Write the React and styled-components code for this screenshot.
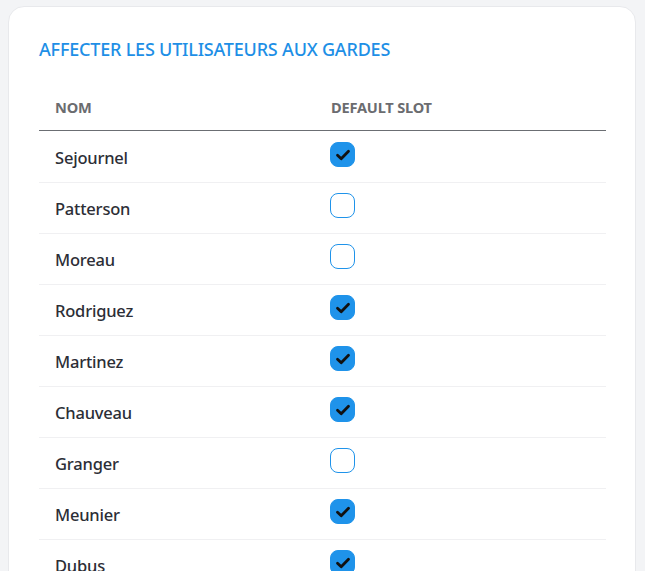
import React from 'react';
import styled, { createGlobalStyle } from 'styled-components';

const GlobalStyle = createGlobalStyle`
  html, body {
    margin: 0;
    padding: 0;
    background: #f3f4f6;
    font-family: "Noto Sans", "Open Sans", sans-serif;
  }
`;

const users = [
  { name: 'Sejournel', slot: true },
  { name: 'Patterson', slot: false },
  { name: 'Moreau', slot: false },
  { name: 'Rodriguez', slot: true },
  { name: 'Martinez', slot: true },
  { name: 'Chauveau', slot: true },
  { name: 'Granger', slot: false },
  { name: 'Meunier', slot: true },
  { name: 'Dubus', slot: true },
  { name: 'Lefebvre', slot: false },
];

function App() {
  return (
    <>
      <GlobalStyle />
      <Page>
        <Card>
          <Title>AFFECTER LES UTILISATEURS AUX GARDES</Title>
          <Table>
            <HeadRow>
              <HeadCell>NOM</HeadCell>
              <HeadCell>DEFAULT SLOT</HeadCell>
            </HeadRow>
            {users.map(u => (
              <Row key={u.name}>
                <NameCell>{u.name}</NameCell>
                <SlotCell>
                  <Checkbox checked={u.slot}>
                    {u.slot && (
                      <svg width="16" height="16" viewBox="0 0 16 16">
                        <path d="M2.5 8.2 L6.2 11.8 L13.5 4.3" fill="none" stroke="#111" strokeWidth="2.8" strokeLinecap="round" strokeLinejoin="round" />
                      </svg>
                    )}
                  </Checkbox>
                </SlotCell>
              </Row>
            ))}
          </Table>
        </Card>
      </Page>
    </>
  );
}

export default App;

const Page = styled.div`
  height: 571px;
  overflow: hidden;
  padding: 6px 9px 0 8px;
  box-sizing: border-box;
`;

const Card = styled.div`
  background: #ffffff;
  border: 1px solid #e8e9ec;
  border-radius: 16px;
  padding: 30px 29px 0 30px;
  min-height: 700px;
  box-sizing: border-box;
`;

const Title = styled.h2`
  margin: 0;
  font-size: 18px;
  line-height: 24px;
  font-weight: 500;
  color: #1e8fe6;
  letter-spacing: -0.2px;
`;

const Table = styled.div`
  margin-top: 20px;
  display: flex;
  flex-direction: column;
`;

const HeadRow = styled.div`
  display: grid;
  grid-template-columns: 276px 1fr;
  height: 50px;
  padding-top: 2px;
  box-sizing: border-box;
  align-items: center;
  border-bottom: 1px solid #6b6e73;
`;

const HeadCell = styled.div`
  padding-left: 16px;
  font-size: 14.6px;
  font-weight: 700;
  color: #6b6c70;
  letter-spacing: -0.2px;
`;

const Row = styled.div`
  display: grid;
  grid-template-columns: 276px 1fr;
  height: 51px;
  box-sizing: border-box;
  align-items: center;
  border-bottom: 1px solid #f0f0f2;

  &:nth-child(2) {
    height: 52px;
    padding-top: 1px;
  }
`;

const NameCell = styled.div`
  padding-left: 16px;
  font-size: 16.5px;
  font-weight: 500;
  color: #2c2e36;
  letter-spacing: -0.2px;
`;

const SlotCell = styled.div`
  padding-left: 15px;
  display: flex;
  align-items: center;
  margin-bottom: 5px;
`;

const Checkbox = styled.div`
  width: 25px;
  height: 25px;
  box-sizing: border-box;
  border-radius: 8px;
  display: flex;
  align-items: center;
  justify-content: center;
  background: ${p => (p.checked ? '#1f93ea' : '#ffffff')};
  border: 1.5px solid #1f93ea;
`;
